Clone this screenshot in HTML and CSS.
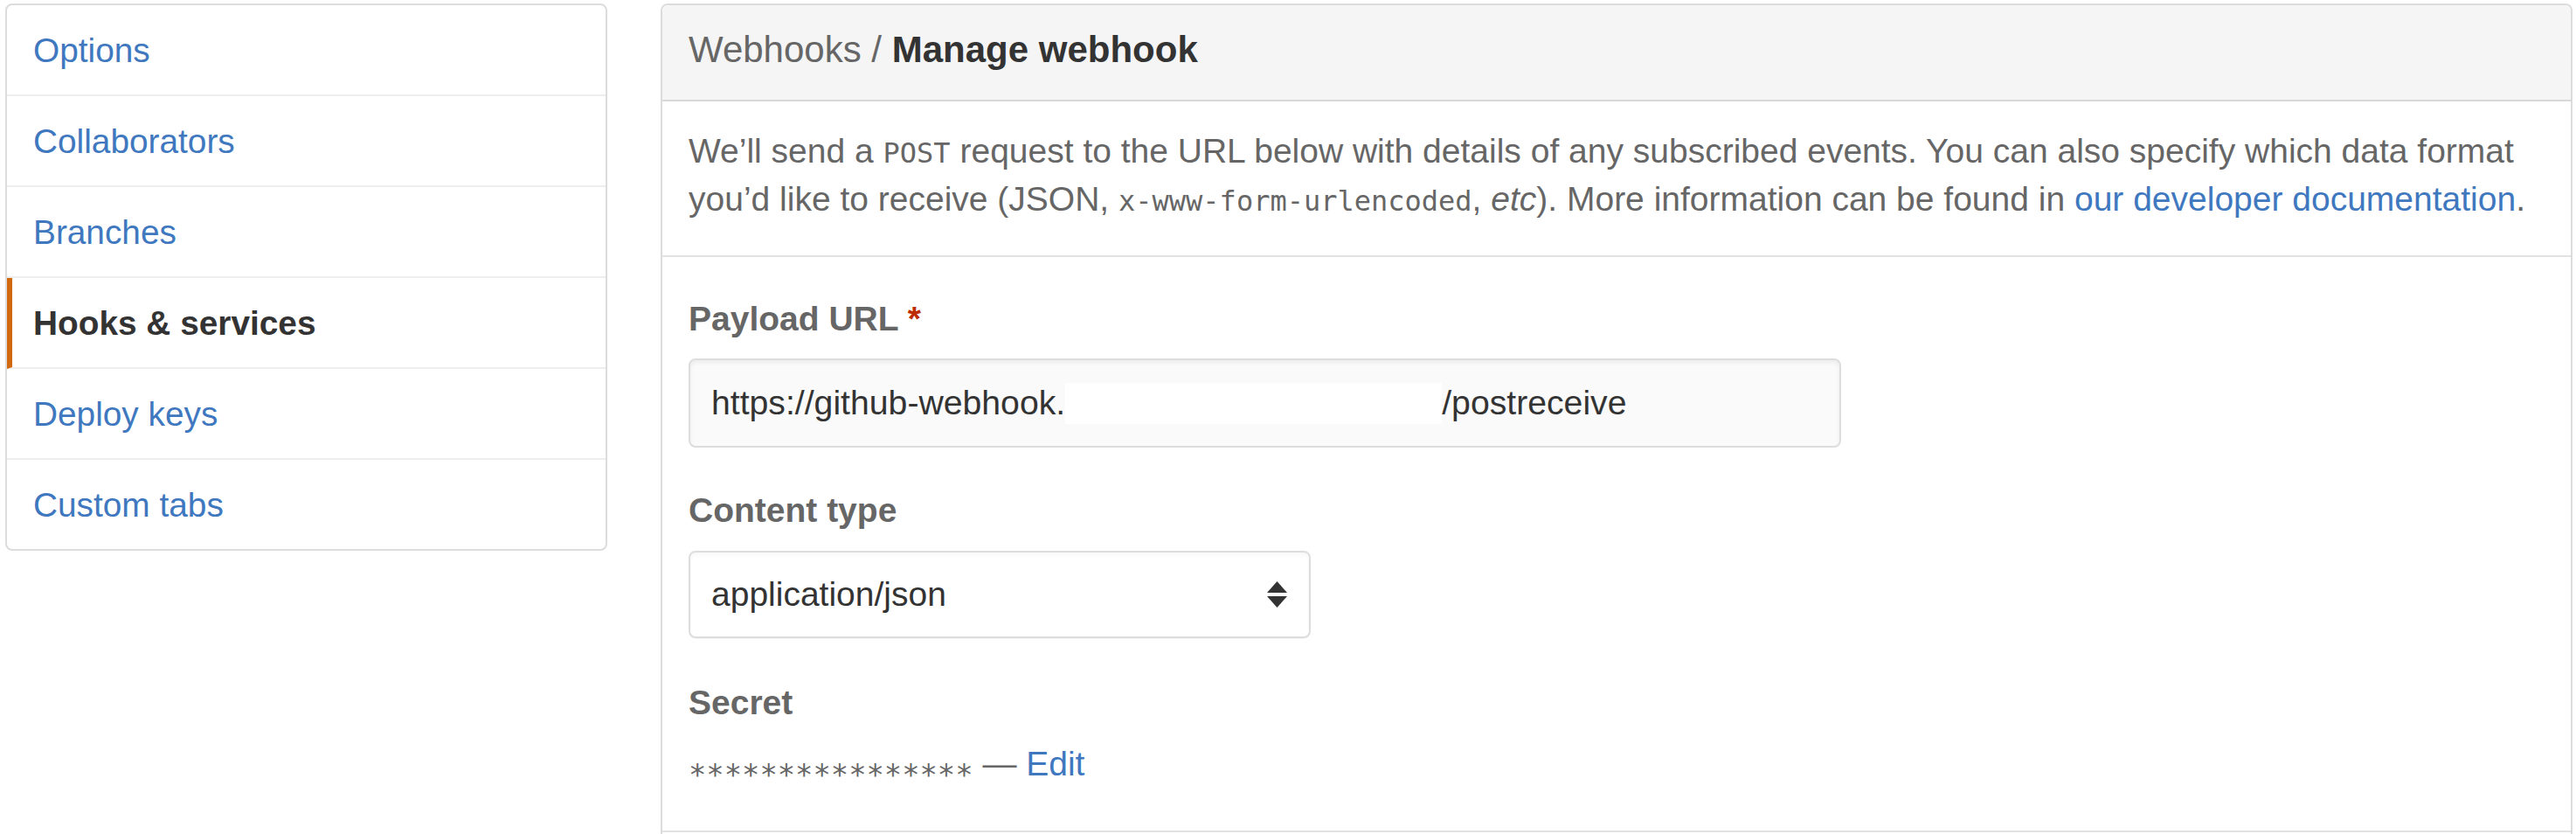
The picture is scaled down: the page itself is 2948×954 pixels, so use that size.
FILE: index.html
```html
<!DOCTYPE html>
<html lang="en">
<head>
<meta charset="utf-8">
<title>Manage webhook</title>
<link rel="stylesheet" href="styles.css">
</head>
<body>
<div class="page">
  <nav class="sidebar">
    <a class="menu-item" href="#">Options</a>
    <a class="menu-item" href="#">Collaborators</a>
    <a class="menu-item" href="#">Branches</a>
    <a class="menu-item selected" href="#">Hooks &amp; services</a>
    <a class="menu-item" href="#">Deploy keys</a>
    <a class="menu-item" href="#">Custom tabs</a>
  </nav>
  <section class="panel">
    <h3 class="panel-header"><span class="crumb">Webhooks /</span> <strong>Manage webhook</strong></h3>
    <p class="panel-desc">We’ll send a <code>POST</code> request to the URL below with details of any subscribed events. You can also specify which data format you’d like to receive (JSON, <code>x-www-form-urlencoded</code>, <em>etc</em>). More information can be found in <a href="#">our developer documentation</a>.</p>
    <div class="panel-form">
      <div class="form-group">
        <label class="form-label">Payload URL <span class="required">*</span></label>
        <div class="text-input">https://github-webhook.<span class="redacted"></span>/postreceive</div>
      </div>
      <div class="form-group">
        <label class="form-label">Content type</label>
        <div class="select-input">
          <span>application/json</span>
          <svg class="select-arrows" width="23" height="30" viewBox="0 0 23 30" aria-hidden="true">
            <polygon points="0,13 11.5,0 23,13" fill="#333"/>
            <polygon points="0,17 23,17 11.5,30" fill="#333"/>
          </svg>
        </div>
      </div>
      <div class="form-group">
        <label class="form-label">Secret</label>
        <div class="secret-value"><span class="mask">****************</span> — <a href="#">Edit</a></div>
      </div>
    </div>
    <div class="panel-rest"></div>
  </section>
</div>
</body>
</html>
```

FILE: styles.css
```css
html, body {
  margin: 0;
  padding: 0;
  overflow: hidden;
  background: #fff;
}

body {
  font-family: "Liberation Sans", Arial, Helvetica, sans-serif;
  color: #333;
}

a {
  color: #4078c0;
  text-decoration: none;
}

.page {
  display: flex;
  align-items: flex-start;
  gap: 61px;
  padding: 4px 4px 0 6px;
}

/* Sidebar menu */
.sidebar {
  width: 689px;
  flex: none;
  box-sizing: border-box;
  border: 2px solid #dcdcdc;
  border-radius: 8px;
  display: flex;
  flex-direction: column;
}

.menu-item {
  display: block;
  padding: 23.5px 29px 23.5px 30px;
  font-size: 38.8px;
  line-height: 55px;
  color: #4078c0;
  border-bottom: 2px solid #eeeeee;
}

.menu-item:last-child {
  border-bottom: none;
}

.menu-item.selected {
  border-left: 6px solid #d26911;
  padding-left: 24px;
  color: #333;
  font-weight: bold;
}

/* Main panel */
.panel {
  flex: 1;
  box-sizing: border-box;
  border: 2px solid #dcdcdc;
  border-bottom: none;
  border-radius: 8px 8px 0 0;
}

.panel-header {
  margin: 0;
  padding: 23px 30px 29px;
  background: #f5f5f5;
  border-bottom: 2px solid #d8d8d8;
  border-radius: 6px 6px 0 0;
  font-size: 42px;
  line-height: 56px;
  font-weight: normal;
  color: #666;
}

.panel-header strong {
  color: #333;
  font-weight: bold;
}

.panel-desc {
  margin: 0;
  padding: 29px 30px 37px;
  font-size: 39px;
  line-height: 55px;
  color: #666;
  border-bottom: 2px solid #e2e2e2;
}

.panel-desc code {
  font-family: "DejaVu Sans Mono", "Liberation Mono", monospace;
  font-size: 32px;
  line-height: 1;
}

.panel-form {
  padding: 43px 30px 46px;
  border-bottom: 2px solid #e2e2e2;
}

.form-group + .form-group {
  margin-top: 44px;
}

.form-group:last-child {
  margin-top: 46px;
}

.form-label {
  display: block;
  font-size: 39px;
  line-height: 55px;
  font-weight: bold;
  color: #666;
  margin-bottom: 18px;
}

.required {
  color: #bd2c00;
}

.text-input {
  width: 1319px;
  height: 102px;
  box-sizing: border-box;
  display: flex;
  align-items: center;
  padding: 0 24px;
  border: 2px solid #dddddd;
  border-radius: 8px;
  background: #fafafa;
  box-shadow: inset 0 3px 5px rgba(0, 0, 0, 0.06);
  font-size: 39.2px;
  color: #333;
  white-space: pre;
}

.redacted {
  display: inline-block;
  width: 431px;
  height: 47px;
  background: #fff;
  align-self: center;
}

.select-input {
  width: 712px;
  height: 100px;
  box-sizing: border-box;
  display: flex;
  align-items: center;
  justify-content: space-between;
  padding: 0 25px 0 24px;
  border: 2px solid #dddddd;
  border-radius: 8px;
  background: #fff;
  box-shadow: inset 0 3px 5px rgba(0, 0, 0, 0.03), 0 1px 0 rgba(0, 0, 0, 0.04);
  font-size: 39px;
  color: #333;
  margin-top: 19px;
}

.select-arrows {
  display: block;
  flex: none;
}

.secret-value {
  margin-top: -3px;
  font-size: 39px;
  line-height: 55px;
  color: #666;
}

.mask {
  font-family: "DejaVu Sans Mono", "Liberation Mono", monospace;
  font-size: 33.8px;
  line-height: 1;
  vertical-align: -11px;
}

.panel-rest {
  height: 30px;
}
```
